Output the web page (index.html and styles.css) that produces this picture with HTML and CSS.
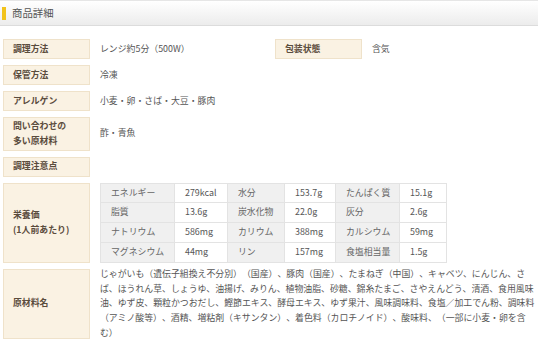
FILE: index.html
```html
<!DOCTYPE html>
<html lang="ja">
<head>
<meta charset="utf-8">
<title>商品詳細</title>
<link rel="stylesheet" href="styles.css">
</head>
<body>
<section class="panel">
  <header class="panel-head">
    <span class="accent"></span>
    <h2 class="panel-title">商品詳細</h2>
  </header>
  <div class="spec">
    <div class="row">
      <div class="label">調理方法</div>
      <div class="value value-half">レンジ約5分（500W）</div>
      <div class="label">包装状態</div>
      <div class="value">含気</div>
    </div>
    <div class="row">
      <div class="label">保管方法</div>
      <div class="value">冷凍</div>
    </div>
    <div class="row">
      <div class="label">アレルゲン</div>
      <div class="value">小麦・卵・さば・大豆・豚肉</div>
    </div>
    <div class="row">
      <div class="label">問い合わせの<br>多い原材料</div>
      <div class="value">酢・青魚</div>
    </div>
    <div class="row">
      <div class="label">調理注意点</div>
      <div class="value"></div>
    </div>
    <div class="row">
      <div class="label">栄養価<br>(1人前あたり)</div>
      <div class="value">
        <table class="nutri">
          <colgroup>
            <col class="c1"><col class="c2"><col class="c3"><col class="c4"><col class="c5"><col class="c6">
          </colgroup>
          <tr><th>エネルギー</th><td>279kcal</td><th>水分</th><td>153.7g</td><th>たんぱく質</th><td>15.1g</td></tr>
          <tr><th>脂質</th><td>13.6g</td><th>炭水化物</th><td>22.0g</td><th>灰分</th><td>2.6g</td></tr>
          <tr><th>ナトリウム</th><td>586mg</td><th>カリウム</th><td>388mg</td><th>カルシウム</th><td>59mg</td></tr>
          <tr><th>マグネシウム</th><td>44mg</td><th>リン</th><td>157mg</td><th>食塩相当量</th><td>1.5g</td></tr>
        </table>
      </div>
    </div>
    <div class="row">
      <div class="label">原材料名</div>
      <div class="value value-long">じゃがいも（遺伝子組換え不分別）（国産）、豚肉（国産）、たまねぎ（中国）、キャベツ、にんじん、さば、ほうれん草、しょうゆ、油揚げ、みりん、植物油脂、砂糖、錦糸たまご、さやえんどう、清酒、食用風味油、ゆず皮、顆粒かつおだし、鰹節エキス、酵母エキス、ゆず果汁、風味調味料、食塩／加工でん粉、調味料（アミノ酸等）、酒精、増粘剤（キサンタン）、着色料（カロチノイド）、酸味料、（一部に小麦・卵を含む）</div>
    </div>
  </div>
</section>
</body>
</html>
```

FILE: styles.css
```css
* { box-sizing: border-box; }

html, body {
  margin: 0;
  padding: 0;
  background: #fff;
}

body {
  font-family: "Noto Sans CJK JP", "Noto Sans", sans-serif;
  font-size: 8.9px;
  line-height: 14.85px;
  color: #555;
  text-spacing-trim: space-all;
}

.panel {
  width: 538px;
}

.panel-head {
  height: 26px;
  width: 538px;
  border-top: 1px solid #e6e6e6;
  border-bottom: 1px solid #dcdcdc;
  background: linear-gradient(#ffffff, #ececec);
  display: flex;
  align-items: center;
  padding-left: 2px;
}

.accent {
  width: 4px;
  height: 13px;
  background: #f2c31c;
  margin-right: 6px;
}

.panel-title {
  margin: 0;
  font-size: 10.4px;
  font-weight: normal;
  color: #555;
  letter-spacing: 0;
}

.spec {
  display: flex;
  flex-direction: column;
  gap: 6px;
  padding: 13px 0 0 3px;
}

.row {
  display: flex;
  align-items: stretch;
}

.label {
  flex: 0 0 87px;
  min-height: 20px;
  padding: 1px 9px;
  border: 1px solid #efe2ca;
  background: #faf2e3;
  color: #5a4c3d;
  font-weight: bold;
  display: flex;
  align-items: center;
}

.value {
  padding-left: 10px;
  display: flex;
  align-items: center;
  flex: 1 1 auto;
}

.value-half {
  flex: 0 0 185px;
}

.value-long {
  display: block;
  margin: -2px 0;
  width: 447px;
}

.nutri {
  border-collapse: collapse;
  table-layout: fixed;
  width: 346px;
}

.nutri .c1 { width: 74px; }
.nutri .c2 { width: 53px; }
.nutri .c3 { width: 57px; }
.nutri .c4 { width: 51px; }
.nutri .c5 { width: 64px; }
.nutri .c6 { width: 47px; }

.nutri th,
.nutri td {
  border: 1px solid #e3e3e3;
  height: 19.75px;
  padding: 0 0 0 10px;
  text-align: left;
  white-space: nowrap;
  vertical-align: middle;
}

.nutri th {
  background: #f0f0f0;
  font-weight: normal;
  color: #666;
}

.nutri td {
  background: #fff;
  color: #555;
}
```
